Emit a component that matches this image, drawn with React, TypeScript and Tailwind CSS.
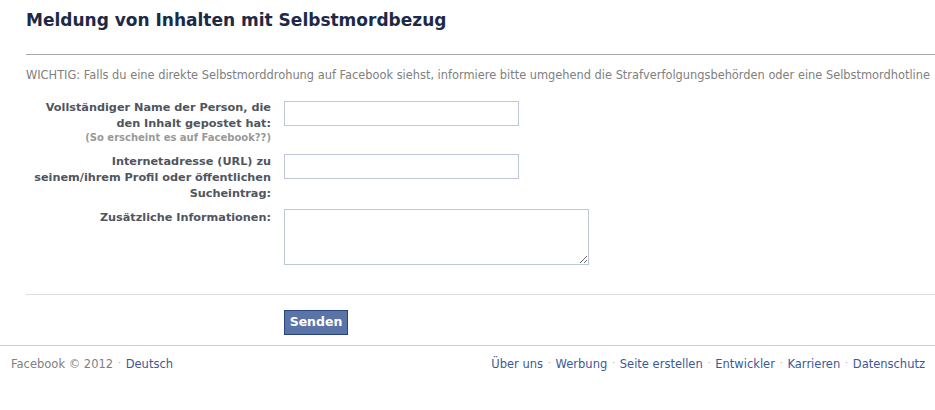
import React from 'react'

const fb = { fontFamily: '"DejaVu Sans", Tahoma, sans-serif' }

const footerLinks = ['Über uns', 'Werbung', 'Seite erstellen', 'Entwickler', 'Karrieren', 'Datenschutz']

function Dot() {
  return <span className="mx-[5px] text-[8px] relative -top-[2px] text-[#999]">·</span>
}

function Row({ label, hint, children, className }: { label: React.ReactNode, hint?: string, children: React.ReactNode, className?: string }) {
  return (
    <div className={'flex gap-x-[13px] ' + (className || '')}>
      <div className="w-[245px] text-right font-bold text-[#50555e] text-[11.25px] leading-[16px] whitespace-nowrap">
        {label}
        {hint && <div className="text-[10px] text-[#999] leading-[12px]">{hint}</div>}
      </div>
      <div>{children}</div>
    </div>
  )
}

export default function App() {
  return (
    <div className="w-[935px] h-[410px] bg-white overflow-hidden" style={fb}>
      <div className="pl-[26px]">
        <h1 className="pt-[10px] h-[54px] text-[17px] leading-[20px] font-bold text-[#1c2a47]">
          Meldung von Inhalten mit Selbstmordbezug
        </h1>
        <div className="border-t border-[#aaaaaa]" />
        <p className="pt-[13px] text-[11.4px] leading-[14px] text-[#808080] whitespace-nowrap">
          WICHTIG: Falls du eine direkte Selbstmorddrohung auf Facebook siehst, informiere bitte umgehend die Strafverfolgungsbehörden oder eine Selbstmordhotline
        </p>

        <div className="mt-[18px]">
          <Row
            label={<>Vollständiger Name der Person, die<br />den Inhalt gepostet hat:</>}
            hint="(So erscheint es auf Facebook??)"
          >
            <input className="mt-[1px] w-[235px] h-[25px] border border-[#bdc7d8] outline-none" />
          </Row>

          <Row
            className="mt-[10px]"
            label={<>Internetadresse (URL) zu<br />seinem/ihrem Profil oder öffentlichen<br />Sucheintrag:</>}
          >
            <input className="w-[235px] h-[25px] border border-[#bdc7d8] outline-none" />
          </Row>

          <Row className="mt-[7px]" label={<div className="pt-[1px]">Zusätzliche Informationen:</div>}>
            <textarea className="block w-[305px] h-[56px] border border-[#bdc7d8] outline-none" />
          </Row>
        </div>

        <div className="mt-[29px] border-t border-[#dddddd]" />
        <div className="pl-[258px] pt-[15px] pb-[10px]">
          <button className="block h-[25px] w-[64px] bg-[#5b74a8] border border-[#29447e] text-white text-[12.5px] font-bold">
            Senden
          </button>
        </div>
      </div>

      <div className="border-t border-[#cccccc]" />
      <div className="flex justify-between pl-[11px] pr-[10px] pt-[11px] text-[11.5px] leading-[14px]">
        <div className="text-[#808080]">
          Facebook © 2012<Dot /><span className="text-[#3b5998]">Deutsch</span>
        </div>
        <div className="text-[#3b5998]">
          {footerLinks.map((l, i) => (
            <span key={l}>
              {i > 0 && <Dot />}
              {l}
            </span>
          ))}
        </div>
      </div>
    </div>
  )
}
